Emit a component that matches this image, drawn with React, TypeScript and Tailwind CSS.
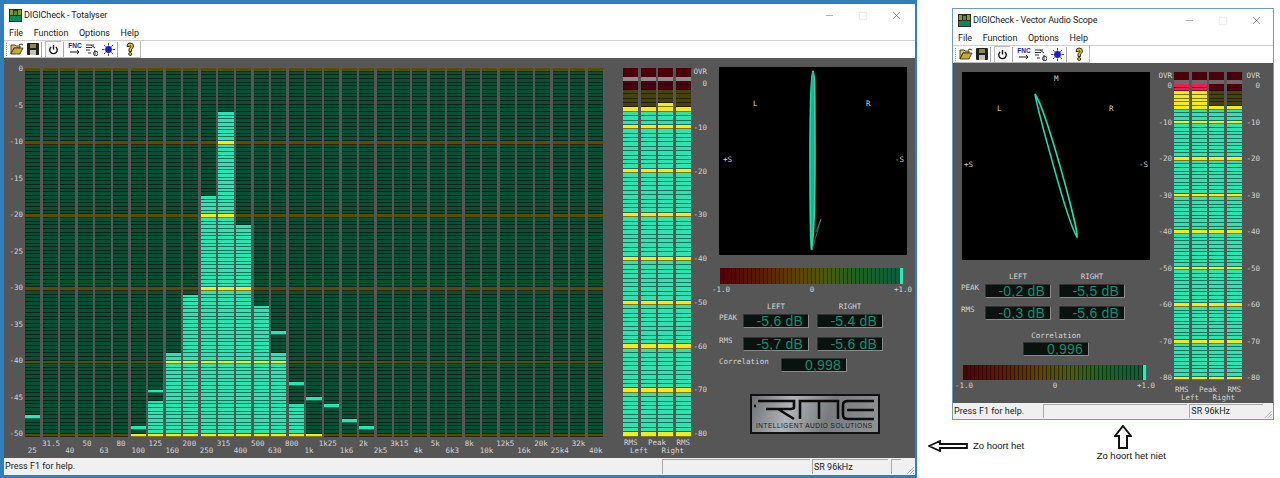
import { ReactNode } from "react";
import { Minus, Square, X } from "lucide-react";

const mono = "font-['DejaVu_Sans_Mono',monospace] text-[7.5px] leading-[8px] text-[#d4d4d4]";

const BANDS = [
  "25", "31.5", "40", "50", "63", "80", "100", "125", "160", "200", "250",
  "315", "400", "500", "630", "800", "1k", "1k25", "1k6", "2k", "2k5", "3k15",
  "4k", "5k", "6k3", "8k", "10k", "12k5", "16k", "20k", "25k4", "32k", "40k",
];

// LED index (from the top) where each lit bar starts, and its floating peak
const BAR_TOPS: Record<number, number> = { 6: 100, 7: 91, 8: 78, 9: 62, 10: 35, 11: 12, 12: 43, 13: 65, 14: 78, 15: 92, 16: 100 };
const BAR_PEAKS: Record<number, number> = { 0: 95, 6: 98, 7: 88, 14: 72, 15: 86, 16: 90, 17: 92, 18: 96, 19: 98 };

const Led = ({ color }: { color: string }) => (
  <div className={`flex-1 min-h-0 border-b border-black/50 ${color}`} />
);

const AnalyzerBand = ({ index }: { index: number }) => {
  const top = BAR_TOPS[index] ?? 101;
  const peak = BAR_PEAKS[index];
  return (
    <div className="flex h-[369px] flex-col">
      {Array.from({ length: 101 }, (_, i) => {
        const lit = i >= top || i === peak;
        const tick = i % 20 === 0;
        const color = lit
          ? tick ? "bg-[#f4ea1e]" : "bg-[#2fe2b0]"
          : tick ? "bg-[#564e08]" : "bg-[#0a4e34]";
        return <Led key={i} color={color} />;
      })}
    </div>
  );
};

const Analyzer = () => (
  <div className="flex w-[599px]">
    <div className={`${mono} mt-[-3px] flex h-[373px] w-[19px] flex-col items-end justify-between`}>
      {["0", "-5", "-10", "-15", "-20", "-25", "-30", "-35", "-40", "-45", "-50"].map((l) => (
        <span key={l}>{l}</span>
      ))}
    </div>
    <div className="ml-[2px] w-[578px]">
      <div className="grid grid-cols-[repeat(33,1fr)] gap-x-[2.4px]">
        {BANDS.map((_, i) => (
          <AnalyzerBand key={i} index={i} />
        ))}
      </div>
      <div className={`${mono} mt-[3px] grid grid-cols-[repeat(33,1fr)] gap-x-[2.4px]`}>
        {BANDS.map((b, i) => (
          <div key={b} className={`flex justify-center whitespace-nowrap ${i % 2 === 0 ? "mt-[7px]" : ""}`}>
            {b}
          </div>
        ))}
      </div>
    </div>
  </div>
);

const meterColor = (i: number, lit: boolean) => {
  if (i < 2) return lit ? "bg-[#e8204e]" : "bg-[#4c0010]";
  if (i < 7 || i % 10 === 0) return lit ? "bg-[#f4ea1e]" : "bg-[#47420c]";
  return lit ? "bg-[#2fe2b0]" : "bg-[#0a4e34]";
};

const MeterColumn = ({ from, big }: { from: number; big: boolean }) => (
  <div className="flex w-[15px] flex-col">
    <div className={`bg-[#4a0008] ${big ? "h-[9px]" : "h-[8px]"}`} />
    <div className={`h-[4px] ${big ? "bg-[#8c8c8c]" : "bg-[#6a6a6a]"}`} />
    <div className={`flex flex-col ${big ? "h-[356px]" : "h-[296px]"}`}>
      {Array.from({ length: 81 }, (_, i) => (
        <Led key={i} color={meterColor(i, i >= from)} />
      ))}
    </div>
  </div>
);

const MeterScale = ({ big }: { big: boolean }) => (
  <div className={`${mono} flex w-[16px] flex-col items-end`}>
    <div className={big ? "h-[12px]" : "h-[10px]"}>OVR</div>
    <div className={`flex flex-col items-end justify-between ${big ? "h-[358px]" : "h-[300px]"}`}>
      {["0", "-10", "-20", "-30", "-40", "-50", "-60", "-70", "-80"].map((l) => (
        <span key={l}>{l}</span>
      ))}
    </div>
  </div>
);

const Meter = ({ values, big }: { values: number[]; big: boolean }) => (
  <div className="flex w-[68px] flex-col">
    <div className="flex justify-between">
      {values.map((v, i) => (
        <MeterColumn key={i} from={v} big={big} />
      ))}
    </div>
    <div className={`${mono} flex justify-between px-[1px] ${big ? "mt-[2px]" : "mt-[6px]"}`}>
      <span>RMS</span>
      <span>Peak</span>
      <span>RMS</span>
    </div>
    <div className={`${mono} flex justify-between px-[7px]`}>
      <span>Left</span>
      <span>Right</span>
    </div>
  </div>
);

const Scope = ({ children, labels }: { children: ReactNode; labels: ReactNode }) => (
  <div className="relative h-[188px] w-[188px] bg-black">
    <svg viewBox="0 0 188 188" className="h-full w-full">
      {children}
    </svg>
    {labels}
  </div>
);

const ScopeLabel = ({ className, children }: { className: string; children: string }) => (
  <span className={`${mono} absolute opacity-[0.99] ${className}`}>{children}</span>
);

const CorrelationBar = ({ className }: { className: string }) => (
  <div className={`flex w-[184px] bg-[linear-gradient(90deg,#520006,#5e1c00_22%,#5e4400_42%,#4c5a08_58%,#1c6420_74%,#0a5e40_100%)] ${className}`}>
    {Array.from({ length: 46 }, (_, i) => (
      <div key={i} className={`flex-1 border-r border-black/45 ${i === 45 ? "bg-[#34e8b6]" : ""}`} />
    ))}
  </div>
);

const BarScale = () => (
  <div className={`${mono} mx-[-8px] mt-[2px] flex w-[200px] justify-between`}>
    <span>-1.0</span>
    <span>0</span>
    <span>+1.0</span>
  </div>
);

const Lcd = ({ children }: { children: string }) => (
  <div className="flex h-[14px] w-[66px] items-center justify-end border-t border-l border-t-[#333] border-l-[#333] border-r border-b border-r-[#8a8a8a] border-b-[#8a8a8a] bg-[#0a1210] pr-[5px] font-['Liberation_Sans',sans-serif] text-[14px] leading-none tracking-[0.2px] text-[#128f6c]">
    {children}
  </div>
);

const Readouts = ({ rows, rowGap }: { rows: [string, string, string][]; rowGap: string }) => (
  <div className="flex flex-col">
    <div className={`${mono} ml-[24px] flex gap-x-[8px]`}>
      <div className="w-[66px] text-center">LEFT</div>
      <div className="w-[66px] text-center">RIGHT</div>
    </div>
    <div className={`mt-[3px] flex flex-col ${rowGap}`}>
      {rows.map(([label, l, r]) => (
        <div key={label} className="flex">
          <span className={`${mono} w-[24px]`}>{label}</span>
          <div className="flex gap-x-[8px]">
            <Lcd>{l}</Lcd>
            <Lcd>{r}</Lcd>
          </div>
        </div>
      ))}
    </div>
  </div>
);

const RmeLogo = () => (
  <div className="flex h-[40px] w-[130px] flex-col border-2 border-[#111] bg-[linear-gradient(110deg,#6e7274,#b0b4b6_30%,#787c7e_60%,#8f9395)]">
    <svg viewBox="0 0 126 26" className="h-[26px] w-[126px]" fill="none" stroke="#0c0c0c" strokeWidth="2.6">
      <path d="M2 10H4M6 5H42V11Q42 13 39 13H14M26 13L42 23" />
      <path d="M48 23V5H86V23M67 5V23" />
      <path d="M122 5H96Q91 5 91 9V19Q91 23 96 23H122M95 14H122" />
    </svg>
    <div className="whitespace-nowrap pl-[4px] font-['Liberation_Sans',sans-serif] text-[6.5px] leading-[8px] tracking-[0.5px] text-[#1a1a1a]">
      INTELLIGENT AUDIO SOLUTIONS
    </div>
  </div>
);

const AppIcon = () => (
  <svg viewBox="0 0 13 13" className="h-[13px] w-[13px]">
    <rect width="13" height="13" fill="#2c2c2c" />
    <rect x="1" y="1" width="3" height="5" fill="#7fa02a" />
    <rect x="5" y="2" width="3" height="4" fill="#5e8a2c" />
    <rect x="9" y="1" width="3" height="5" fill="#7fa02a" />
    <rect x="1" y="7" width="11" height="5" fill="#0e8a5e" />
  </svg>
);

const ToolbarSep = () => <div className="mx-[2px] h-[15px] w-[2px] border-l border-[#a8a8a8] bg-white" />;

const Toolbar = () => (
  <div className="flex h-[17px] items-center bg-white pl-[1px]">
    <div className="flex h-full w-[136px] items-center border-r border-b border-[#bdbdbd]">
      <div className="mx-[1px] h-[13px] w-[2px] border-l border-dotted border-[#999]" />
      <svg viewBox="0 0 14 12" className="ml-[1px] h-[12px] w-[14px]">
        <path d="M1 2H5L6 3H10V5H4L1 11Z" fill="#d8c060" stroke="#2a2a10" strokeWidth="0.8" />
        <path d="M1 11L4 5H13L10 11Z" fill="#c8a838" stroke="#2a2a10" strokeWidth="0.8" />
        <path d="M9 2Q11 0 13 2" fill="none" stroke="#222" strokeWidth="0.9" />
      </svg>
      <svg viewBox="0 0 12 12" className="ml-[3px] h-[12px] w-[12px]">
        <rect width="12" height="12" rx="1" fill="#222" />
        <rect x="3" y="1" width="6" height="4" fill="#8a8a5a" />
        <rect x="3" y="7" width="6" height="5" fill="#c4c4b0" />
      </svg>
      <ToolbarSep />
      <div className="flex h-[16px] w-[16px] items-center justify-center border-t border-l border-[#bbb] bg-[#f7f7f7]">
        <svg viewBox="0 0 12 12" className="h-[11px] w-[11px]" fill="none" stroke="#111" strokeWidth="1.5">
          <path d="M3.4 3.2A4.1 4.1 0 1 0 8.6 3.2M6 1V6" />
        </svg>
      </div>
      <ToolbarSep />
      <div className="ml-[2px] flex h-[14px] w-[12px] flex-col items-center">
        <span className="font-['Liberation_Sans',sans-serif] text-[6.5px] font-bold leading-[7px] text-[#2020a0]">FNC</span>
        <svg viewBox="0 0 12 6" className="h-[6px] w-[12px]" fill="none" stroke="#111" strokeWidth="1">
          <path d="M1 3H10M8 1L10 3L8 5" />
        </svg>
      </div>
      <svg viewBox="0 0 12 13" className="ml-[5px] h-[13px] w-[12px]" fill="none" stroke="#333" strokeWidth="1">
        <path d="M0 2H8M0 4.5H6M0 7H4M5 2L9 5M2 10H5M9 7V12M7.5 10.5A1.5 1.5 0 0 1 12 10.5A1.5 1.5 0 0 1 7.5 10.5" />
      </svg>
      <svg viewBox="0 0 13 13" className="ml-[4px] h-[13px] w-[13px]" stroke="#333" strokeWidth="0.9">
        <path d="M6.5 0V2.5M6.5 10.5V13M0 6.5H2.5M10.5 6.5H13M2 2L3.6 3.6M11 2L9.4 3.6M2 11L3.6 9.4M11 11L9.4 9.4" />
        <circle cx="6.5" cy="6.5" r="3.4" fill="#1a1adc" stroke="none" />
      </svg>
      <ToolbarSep />
      <svg viewBox="0 0 10 14" className="ml-[4px] h-[14px] w-[10px]" fill="none" stroke="#3a3200" strokeWidth="1">
        <path d="M2 4.5Q2 1 5 1Q8.5 1 8.5 4Q8.5 6 6.5 7V9.5H4V6.5Q6 5.5 6 4Q5 3 4.5 4.5Z" fill="#d8c030" />
        <circle cx="5.2" cy="12" r="1.5" fill="#d8c030" />
      </svg>
    </div>
  </div>
);

type WindowProps = {
  title: string;
  className: string;
  clientClass: string;
  firstPane: string;
  extraPane?: boolean;
  controlsClass: string;
  children: ReactNode;
};

const AppWindow = ({ title, className, clientClass, firstPane, extraPane, controlsClass, children }: WindowProps) => (
  <div className={`flex flex-col bg-white font-['Roboto',sans-serif] text-[#222] ${className}`}>
    <div className="flex h-[23px] shrink-0 items-center pl-[5px]">
      <AppIcon />
      <span className="ml-[2px] text-[9px] tracking-[-0.1px]">{title}</span>
      <div className={`ml-auto flex items-center ${controlsClass}`}>
        <Minus size={11} strokeWidth={1} className="text-[#555]" />
        <Square size={10} strokeWidth={1} className="ml-[23px] text-[#ccc]" />
        <X size={13} strokeWidth={1} className="ml-[22px] text-[#444]" />
      </div>
    </div>
    <div className="flex h-[13px] shrink-0 items-center gap-x-[10.5px] pl-[5px] text-[9px]">
      <span>File</span>
      <span>Function</span>
      <span>Options</span>
      <span>Help</span>
    </div>
    <div className="h-[1px] shrink-0 bg-[#cfcfcf]" />
    <Toolbar />
    <div className={`flex shrink-0 bg-[#565656] ${clientClass}`}>{children}</div>
    <div className="flex min-h-0 flex-1 items-stretch bg-[#f0f0f0] text-[9px] leading-none">
      <div className={`flex items-center pl-[1px] ${firstPane}`}>Press F1 for help.</div>
      <div className="my-[1px] w-[148px] border-t border-l border-[#a9a9a9]" />
      <div className="my-[1px] ml-[2px] flex w-[76px] items-center border-t border-l border-[#a9a9a9] pl-[1px]">SR 96kHz</div>
      {extraPane && <div className="my-[1px] ml-[3px] w-[10px] border-t border-l border-[#a9a9a9]" />}
      <svg viewBox="0 0 10 10" className="ml-auto mt-auto h-[10px] w-[10px]" stroke="#b0b0b0" strokeWidth="1">
        <path d="M9 2L2 9M9 5L5 9M9 8L8 9" />
      </svg>
    </div>
  </div>
);

const Totalyser = () => (
  <AppWindow
    title="DIGICheck - Totalyser"
    className="h-[471px] w-[911px]"
    clientClass="h-[400px] pt-[10px]"
    firstPane="w-[658px]"
    extraPane
    controlsClass="mr-[12px]"
  >
    <Analyzer />
    <div className="ml-[20px]">
      <Meter values={[6, 6, 5, 6]} big />
    </div>
    <MeterScale big />
    <div className="-mt-[1px] ml-[12px] flex w-[188px] flex-col">
      <Scope
        labels={
          <>
            <ScopeLabel className="left-[34px] top-[33px]">L</ScopeLabel>
            <ScopeLabel className="left-[147px] top-[33px]">R</ScopeLabel>
            <ScopeLabel className="left-[4px] top-[89px]">+S</ScopeLabel>
            <ScopeLabel className="right-[3px] top-[89px]">-S</ScopeLabel>
          </>
        }
      >
        <path d="M94 4C92 4 91 30 91 90C91 130 91 170 92.5 183C95 170 96 130 96 90C96 30 96 4 94 4Z" fill="#14b48a" stroke="#22dcaa" strokeWidth="1.6" />
        <path d="M93 183L102 152L97 165" fill="none" stroke="#2f9c80" strokeWidth="0.7" />
      </Scope>
      <div className="ml-[1px] mt-[13px]">
        <CorrelationBar className="h-[16px]" />
        <BarScale />
      </div>
      <div className="mt-[9px]">
        <Readouts
          rowGap="gap-y-[9px]"
          rows={[
            ["PEAK", "-5,6 dB", "-5,4 dB"],
            ["RMS", "-5,7 dB", "-5,6 dB"],
          ]}
        />
      </div>
      <div className="mt-[7px] flex">
        <span className={`${mono} w-[62px]`}>Correlation</span>
        <Lcd>0,998</Lcd>
      </div>
      <div className="ml-[31px] mt-[22px]">
        <RmeLogo />
      </div>
    </div>
  </AppWindow>
);

const VectorScope = () => (
  <AppWindow
    title="DIGICheck - Vector Audio Scope"
    className="h-[412px] w-[322px] border border-[#6f9ab8]"
    clientClass="h-[340px] pt-[9px]"
    firstPane="w-[93px]"
    controlsClass="mr-[10px]"
  >
    <div className="ml-[9px] flex w-[188px] flex-col">
      <Scope
        labels={
          <>
            <ScopeLabel className="left-[92px] top-[3px]">M</ScopeLabel>
            <ScopeLabel className="left-[35px] top-[33px]">L</ScopeLabel>
            <ScopeLabel className="left-[147px] top-[33px]">R</ScopeLabel>
            <ScopeLabel className="left-[2px] top-[89px]">+S</ScopeLabel>
            <ScopeLabel className="right-[2px] top-[89px]">-S</ScopeLabel>
          </>
        }
      >
        <path d="M73 22C74 30 105 150 115 165C117 160 85 40 73 22Z" fill="none" stroke="#22dcaa" strokeWidth="1.6" />
      </Scope>
      <div className="-ml-[1px] mt-[13px]">
        <Readouts
          rowGap="gap-y-[8px]"
          rows={[
            ["PEAK", "-0,2 dB", "-5,5 dB"],
            ["RMS", "-0,3 dB", "-5,6 dB"],
          ]}
        />
      </div>
      <div className="mt-[12px] flex flex-col items-center">
        <span className={mono}>Correlation</span>
        <div className="mt-[2px]">
          <Lcd>0,996</Lcd>
        </div>
      </div>
      <div className="ml-[1px] mt-[9px]">
        <CorrelationBar className="h-[15px]" />
        <BarScale />
      </div>
    </div>
    <div className="ml-[6px]">
      <MeterScale big={false} />
    </div>
    <div className="ml-[2px]">
      <Meter values={[0, 0, 6, 6]} big={false} />
    </div>
    <div className="ml-[2px]">
      <MeterScale big={false} />
    </div>
  </AppWindow>
);

export default function App() {
  return (
    <div className="flex h-[478px] w-[1280px] overflow-hidden bg-white">
      <div className="h-[478px] w-[917px] shrink-0 bg-[#2f7fbe] pl-[4px] pt-[4px]">
        <Totalyser />
      </div>
      <div className="ml-[35px] flex flex-col pt-[8px]">
        <VectorScope />
        <div className="-ml-[24px] flex font-['Liberation_Sans',sans-serif] text-[9.5px] leading-none text-[#111]">
          <div className="mt-[20px] flex h-[12px] items-center">
            <svg viewBox="0 0 40 12" className="h-[12px] w-[40px]" fill="white" stroke="#111" strokeWidth="1.8">
              <path d="M1 6L12 1V4H39V8H12V11Z" />
            </svg>
            <span className="ml-[5px]">Zo hoort het</span>
          </div>
          <div className="ml-[67px] mt-[5px] flex w-[80px] flex-col items-center">
            <svg viewBox="0 0 18 24" className="mr-[16px] h-[24px] w-[18px]" fill="white" stroke="#111" strokeWidth="2">
              <path d="M9 1L17 11H13V23H5V11H1Z" />
            </svg>
            <span className="mt-[2px] whitespace-nowrap">Zo hoort het niet</span>
          </div>
        </div>
      </div>
    </div>
  );
}
